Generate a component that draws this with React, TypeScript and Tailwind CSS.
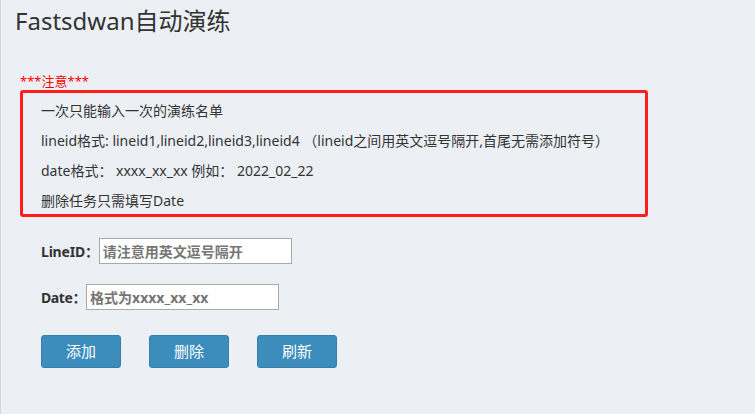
import React from "react";

const font = {
  fontFamily: '"Noto Sans", "Noto Sans CJK SC", sans-serif',
};

const App = () => {
  return (
    <div
      className="min-h-screen w-full bg-[#ecf0f5] border-l border-[#d2d6de] text-[#333]"
      style={font}
    >
      <h1 className="pl-[14px] pt-[4px] text-[24px] leading-[34px] font-normal">
        Fastsdwan自动演练
      </h1>

      <section className="pl-[19px] pt-[34px]">
        <p className="text-[13px] leading-[18px] text-[#ff0000]">***注意***</p>
        <div className="w-[628px] h-[127px] border-[3px] border-[#ff1f1a] rounded-[3px] pl-[18px] pt-[3px] text-[14px] flex flex-col">
          <p className="leading-[30px]">一次只能输入一次的演练名单</p>
          <p className="leading-[30px]">
            lineid格式: lineid1,lineid2,lineid3,lineid4 （lineid之间用英文逗号隔开,首尾无需添加符号）
          </p>
          <p className="leading-[30px]">date格式： xxxx_xx_xx 例如： 2022_02_22</p>
          <p className="leading-[30px]">删除任务只需填写Date</p>
        </div>
      </section>

      <main className="pl-[40px] pt-[21px] flex flex-col">
        <div className="flex items-center h-[26px]">
          <label className="text-[14px] font-bold tracking-[-0.2px]">LineID：</label>
          <input
            className="w-[193px] h-[26px] border border-[#a9a9a9] bg-white px-[3px] text-[14px] font-bold placeholder:text-[#757575] outline-none"
            placeholder="请注意用英文逗号隔开"
          />
        </div>
        <div className="flex items-center h-[26px] mt-[20px]">
          <label className="text-[14px] font-bold tracking-[-0.4px]">Date：</label>
          <input
            className="w-[193px] h-[26px] border border-[#a9a9a9] bg-white px-[3px] text-[14px] font-bold placeholder:text-[#757575] outline-none"
            placeholder="格式为xxxx_xx_xx"
          />
        </div>
        <div className="flex gap-[28px] mt-[25px]">
          <button className="w-[80px] h-[33px] rounded-[3px] bg-[#3c8dbc] border border-[#367fa9] text-white text-[15px]">
            添加
          </button>
          <button className="w-[80px] h-[33px] rounded-[3px] bg-[#3c8dbc] border border-[#367fa9] text-white text-[15px]">
            删除
          </button>
          <button className="w-[80px] h-[33px] rounded-[3px] bg-[#3c8dbc] border border-[#367fa9] text-white text-[15px]">
            刷新
          </button>
        </div>
      </main>
    </div>
  );
};

export default App;
